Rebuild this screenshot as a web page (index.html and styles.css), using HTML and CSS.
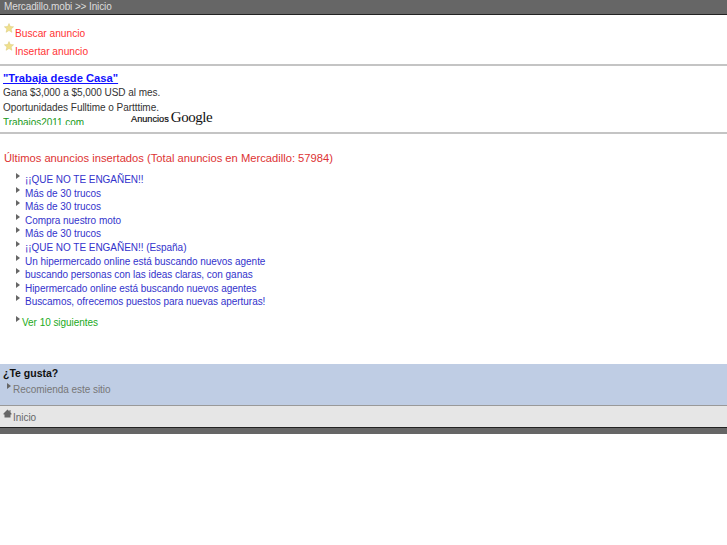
FILE: index.html
```html
<!DOCTYPE html>
<html lang="es">
<head>
    <meta charset="UTF-8">
    <title>Mercadillo.mobi</title>
    <link rel="stylesheet" href="styles.css">
</head>
<body>
    <div class="cabecera">Mercadillo.mobi &gt;&gt; Inicio</div>

    <div class="menu">
        <div class="menu-item">
            <svg class="estrella" width="10" height="10" viewBox="0 0 10 10"><path d="M5 .5 6.300 3.600 9.600 3.800 7.100 6 7.900 9.300 5 7.500 2.100 9.300 2.900 6 .4 3.800 3.700 3.600Z" fill="#f0e08c" stroke="#d8c878" stroke-width=".5"/></svg>
            <a href="#">Buscar anuncio</a>
        </div>
        <div class="menu-item">
            <svg class="estrella" width="10" height="10" viewBox="0 0 10 10"><path d="M5 .5 6.300 3.600 9.600 3.800 7.100 6 7.900 9.300 5 7.500 2.100 9.300 2.900 6 .4 3.800 3.700 3.600Z" fill="#f0e08c" stroke="#d8c878" stroke-width=".5"/></svg>
            <a href="#">Insertar anuncio</a>
        </div>
    </div>

    <div class="publi">
        <div class="publi-texto">
            <a class="publi-titulo" href="#">"Trabaja desde Casa"</a>
            <p>Gana $3,000 a $5,000 USD al mes.</p>
            <p>Oportunidades Fulltime o Partttime.</p>
            <p class="publi-url">Trabajos2011.com</p>
        </div>
        <div class="publi-marca"><span class="anuncios">Anuncios</span><span class="google">Google</span></div>
    </div>

    <div class="ultimos">
        <h2>Últimos anuncios insertados (Total anuncios en Mercadillo: 57984)</h2>
        <ul class="lista">
            <li><a href="#">¡¡QUE NO TE ENGAÑEN!!</a></li>
            <li><a href="#">Más de 30 trucos</a></li>
            <li><a href="#">Más de 30 trucos</a></li>
            <li><a href="#">Compra nuestro moto</a></li>
            <li><a href="#">Más de 30 trucos</a></li>
            <li><a href="#">¡¡QUE NO TE ENGAÑEN!! (España)</a></li>
            <li><a href="#">Un hipermercado online está buscando nuevos agente</a></li>
            <li><a href="#">buscando personas con las ideas claras, con ganas</a></li>
            <li><a href="#">Hipermercado online está buscando nuevos agentes</a></li>
            <li><a href="#">Buscamos, ofrecemos puestos para nuevas aperturas!</a></li>
        </ul>
        <div class="siguientes"><a href="#">Ver 10 siguientes</a></div>
    </div>

    <div class="gusta">
        <strong>¿Te gusta?</strong>
        <div class="recomienda"><a href="#">Recomienda este sitio</a></div>
    </div>

    <div class="pie">
        <svg class="casa" width="9" height="9" viewBox="0 0 9 9"><path d="M4.500 .5 6.500 2.500V1H7.500V3.500L8.500 4.500V5.500H7.500V8.500H1.500V5.500H.5V4.500Z" fill="#666"/></svg>
        <a href="#">Inicio</a>
    </div>
    <div class="fin"></div>
</body>
</html>
```
FILE: styles.css
```css
body {
    margin: 0;
    font-family: "Liberation Sans", Arial, sans-serif;
    font-size: 10px;
    letter-spacing: -0.04px;
    background-color: #fff;
    color: #333;
}

a {
    text-decoration: none;
}

.cabecera {
    height: 14px;
    line-height: 13px;
    padding-left: 4px;
    background-color: #666;
    border-bottom: 1px solid #222;
    color: #ddd;
    letter-spacing: -0.12px;
}

.menu {
    height: 40px;
    padding: 8px 0 0 4px;
}

.menu-item {
    display: flex;
    height: 18px;
}

.menu-item a {
    color: #f33;
    padding-left: 1px;
    padding-top: 5px;
    font-size: 10.200px;
    letter-spacing: 0;
}

.estrella {
    flex: none;
}

.publi {
    border-top: 2px solid #c4c4c4;
    border-bottom: 2px solid #c4c4c4;
    height: 66px;
    margin-top: 1px;
    padding-left: 3px;
    position: relative;
}

.publi-texto {
    height: 53px;
    overflow: hidden;
    padding-top: 6px;
}

.publi-titulo {
    font-size: 11.200px;
    font-weight: bold;
    color: #11f;
    text-decoration: underline;
    line-height: 13px;
    display: block;
    letter-spacing: 0;
}

.publi p {
    margin: 0;
    line-height: 15px;
}

.publi-url {
    color: #1a9a1a;
}

.publi-marca {
    position: absolute;
    left: 131px;
    top: 42px;
    height: 18px;
    line-height: 18px;
    color: #111;
    white-space: nowrap;
    letter-spacing: 0;
}

.anuncios {
    font-size: 9.200px;
    -webkit-text-stroke: 0.2px #111;
}

.google {
    font-family: "Liberation Serif", serif;
    font-size: 15px;
    letter-spacing: -0.45px;
    margin-left: 2px;
}

.ultimos {
    padding: 17px 0 0 4px;
}

.ultimos h2 {
    margin: 0;
    font-size: 11.200px;
    font-weight: normal;
    color: #d33;
    line-height: 14px;
    letter-spacing: 0;
}

.lista {
    list-style: none;
    margin: 8px 0 0;
    padding: 0 0 0 21px;
}

.lista li,
.siguientes,
.recomienda {
    position: relative;
}

.lista li {
    height: 13.620px;
    line-height: 14px;
}

.lista a {
    color: #33c;
}

.lista li::before,
.siguientes::before,
.recomienda::before {
    content: "";
    position: absolute;
    left: -9px;
    top: 0;
    border-left: 4px solid #666;
    border-top: 3px solid transparent;
    border-bottom: 3px solid transparent;
}

.siguientes {
    margin: 7px 0 0 18px;
    line-height: 14px;
}

.siguientes::before {
    left: -6px;
}

.siguientes a {
    color: #2a2;
}

.gusta {
    margin-top: 34px;
    height: 42px;
    background-color: #bfcde4;
    border-bottom: 1px solid #999;
    padding: 3px 0 0 3px;
    box-sizing: border-box;
    color: #111;
    font-size: 10.500px;
    letter-spacing: 0;
}

.recomienda {
    margin: 5px 0 0 10px;
    font-size: 10px;
    letter-spacing: -0.04px;
}

.recomienda::before {
    left: -6px;
    top: -1px;
}

.recomienda a {
    color: #777;
}

.pie {
    display: flex;
    height: 22px;
    background-color: #e6e6e6;
    border-bottom: 1px solid #222;
    padding: 0 0 0 3px;
    box-sizing: border-box;
}

.casa {
    margin-top: 3px;
    flex: none;
}

.pie a {
    color: #666;
    padding: 6px 0 0 1px;
}

.fin {
    height: 6px;
    background-color: #666;
}
```
